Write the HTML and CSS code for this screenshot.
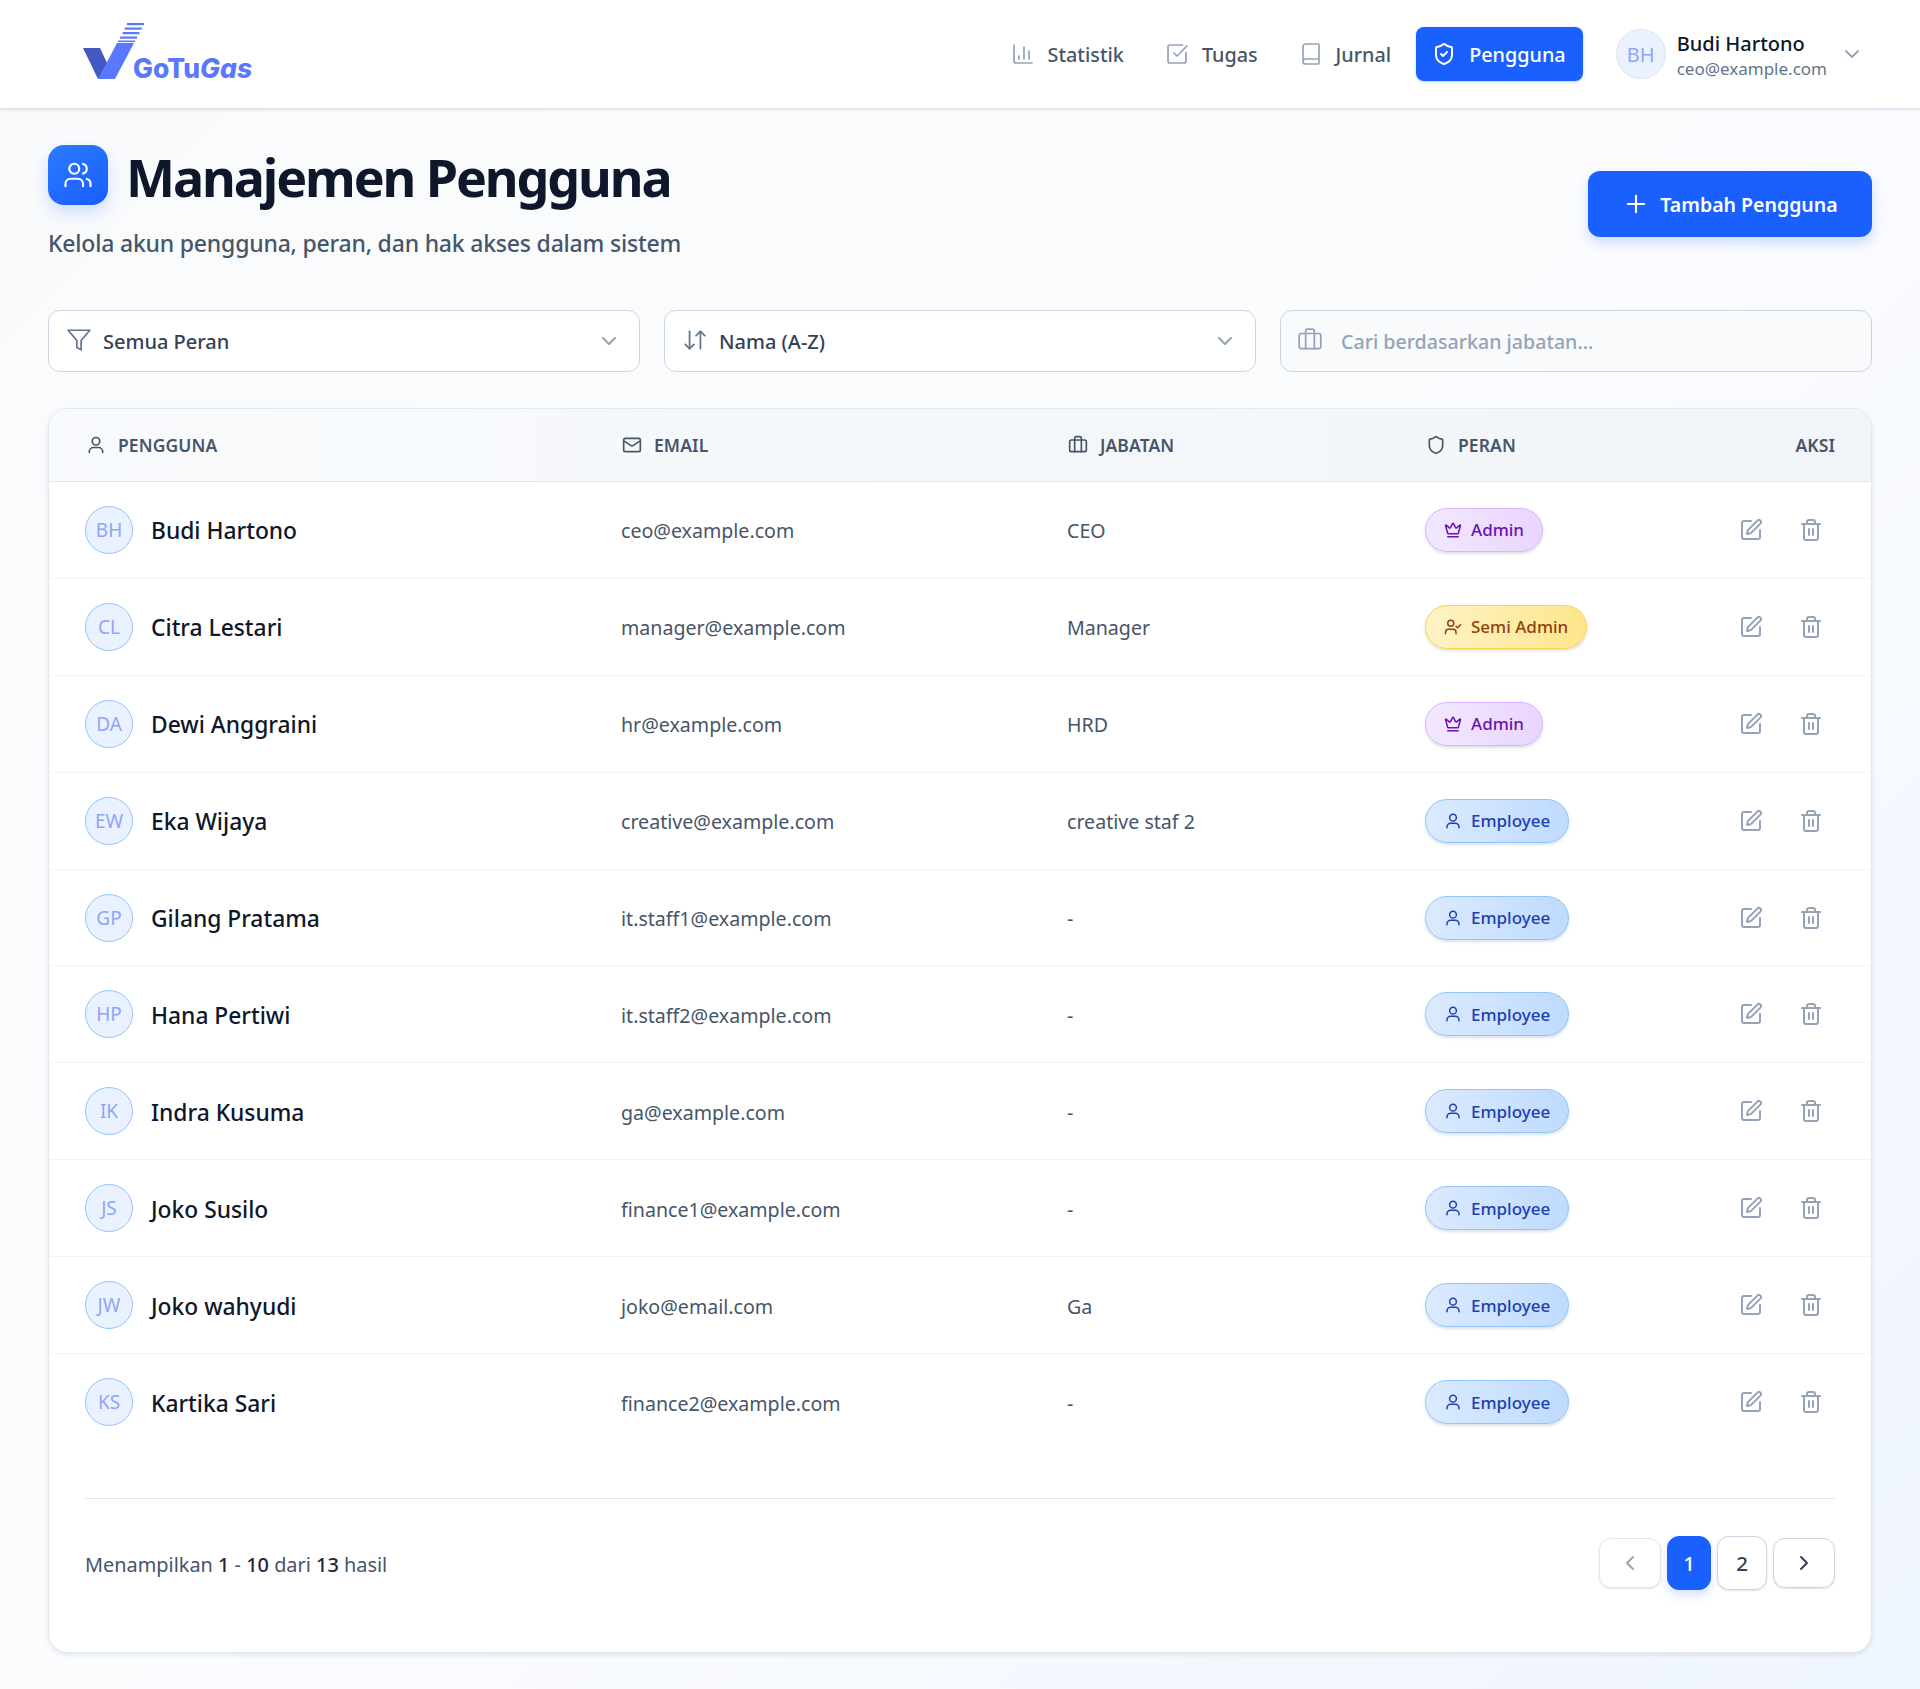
FILE: index.html
```html
<!DOCTYPE html>
<html lang="id">
<head>
<meta charset="utf-8">
<title>Manajemen Pengguna</title>
<link rel="stylesheet" href="styles.css">
</head>
<body>
<svg class="sprite" width="0" height="0" aria-hidden="true">
  <defs>
    <symbol id="i-user" viewBox="0 0 24 24"><circle cx="12" cy="7.5" r="4.5"/><path d="M20 21v-1a5 5 0 0 0-5-5H9a5 5 0 0 0-5 5v1"/></symbol>
    <symbol id="i-mail" viewBox="0 0 24 24"><rect x="2" y="4" width="20" height="16" rx="2"/><path d="m22 7-8.97 5.7a1.94 1.94 0 0 1-2.06 0L2 7"/></symbol>
    <symbol id="i-brief" viewBox="0 0 24 24"><path d="M16 20V4a2 2 0 0 0-2-2h-4a2 2 0 0 0-2 2v16"/><rect x="2" y="6" width="20" height="14" rx="2"/></symbol>
    <symbol id="i-shield" viewBox="0 0 24 24"><path d="M20 13c0 5-3.5 7.5-7.66 8.95a1 1 0 0 1-.67-.01C7.5 20.5 4 18 4 13V6a1 1 0 0 1 1-1c2 0 4.5-1.2 6.24-2.72a1.17 1.17 0 0 1 1.52 0C14.51 3.81 17 5 19 5a1 1 0 0 1 1 1z"/></symbol>
    <symbol id="i-edit" viewBox="0 0 24 24"><path d="M12 3H5a2 2 0 0 0-2 2v14a2 2 0 0 0 2 2h14a2 2 0 0 0 2-2v-7"/><path d="M18.375 2.625a1 1 0 0 1 3 3l-9.013 9.014a2 2 0 0 1-.853.505l-2.873.84a.5.5 0 0 1-.62-.62l.84-2.873a2 2 0 0 1 .506-.852z"/></symbol>
    <symbol id="i-trash" viewBox="0 0 24 24"><path d="M3 6h18"/><path d="M19 6v14a2 2 0 0 1-2 2H7a2 2 0 0 1-2-2V6"/><path d="M8 6V4a2 2 0 0 1 2-2h4a2 2 0 0 1 2 2v2"/><path d="M10 11v6"/><path d="M14 11v6"/></symbol>
    <symbol id="i-crown" viewBox="0 0 24 24"><path d="M11.562 3.266a.5.5 0 0 1 .876 0L15.39 8.87a1 1 0 0 0 1.516.294L21.183 5.5a.5.5 0 0 1 .798.519l-2.834 10.246a1 1 0 0 1-.956.734H5.81a1 1 0 0 1-.957-.734L2.02 6.02a.5.5 0 0 1 .798-.519l4.276 3.664a1 1 0 0 0 1.516-.294z"/><path d="M5 21h14"/></symbol>
    <symbol id="i-usercheck" viewBox="0 0 24 24"><path d="M16 21v-2a4 4 0 0 0-4-4H6a4 4 0 0 0-4 4v2"/><circle cx="9" cy="7" r="4"/><path d="m16 11 2 2 4-4"/></symbol>
    <symbol id="i-chev" viewBox="0 0 24 24"><path d="m6 9 6 6 6-6"/></symbol>
  </defs>
</svg>

<header class="topbar">
  <div class="logo">
    <svg class="logo-mark" viewBox="0 0 61 56" aria-hidden="true">
      <polygon points="0,25 17,25 25,42 15,56" fill="#4458c4"/>
      <polygon points="34,20 51,20 32,56 15,56" fill="#5a78ff"/>
      <rect x="44" y="0" width="17" height="2.2" fill="#5a78ff"/>
      <rect x="41.7" y="4.5" width="17" height="2.2" fill="#5a78ff"/>
      <rect x="39.5" y="9" width="17" height="2.2" fill="#5a78ff"/>
      <rect x="37" y="13.5" width="17" height="2.2" fill="#5a78ff"/>
      <rect x="35" y="17.5" width="17" height="1.6" fill="#5a78ff"/>
    </svg>
    <span class="logo-text">GoTu<em>Gas</em></span>
  </div>
  <nav class="nav">
    <a class="nav-item"><svg class="ico nav-ico" viewBox="0 0 24 24"><path d="M3 3v16a2 2 0 0 0 2 2h16"/><path d="M8 17v-3"/><path d="M13 17V5"/><path d="M18 17V9"/></svg>Statistik</a>
    <a class="nav-item"><svg class="ico nav-ico" viewBox="0 0 24 24"><path d="M21 10.5V19a2 2 0 0 1-2 2H5a2 2 0 0 1-2-2V5a2 2 0 0 1 2-2h12.5"/><path d="m9 11 3 3L22 4"/></svg>Tugas</a>
    <a class="nav-item"><svg class="ico nav-ico" viewBox="0 0 24 24"><path d="M4 19.5v-15A2.5 2.5 0 0 1 6.5 2H19a1 1 0 0 1 1 1v18a1 1 0 0 1-1 1H6.5a1 1 0 0 1 0-5H20"/></svg>Jurnal</a>
    <a class="nav-item nav-active"><svg class="ico nav-ico" viewBox="0 0 24 24"><path d="M20 13c0 5-3.5 7.5-7.66 8.95a1 1 0 0 1-.67-.01C7.5 20.5 4 18 4 13V6a1 1 0 0 1 1-1c2 0 4.5-1.2 6.24-2.72a1.17 1.17 0 0 1 1.52 0C14.51 3.81 17 5 19 5a1 1 0 0 1 1 1z"/><path d="m9 12 2 2 4-4"/></svg>Pengguna</a>
  </nav>
  <div class="account">
    <span class="avatar avatar-top">BH</span>
    <span class="account-text"><span class="account-name">Budi Hartono</span><span class="account-mail">ceo@example.com</span></span>
    <svg class="ico account-chev"><use href="#i-chev"/></svg>
  </div>
</header>

<main class="page">
  <section class="head">
    <div>
      <div class="title-row">
        <span class="title-badge"><svg class="ico" viewBox="0 0 24 24"><path d="M16 21v-2a4 4 0 0 0-4-4H6a4 4 0 0 0-4 4v2"/><circle cx="9" cy="7" r="4"/><path d="M22 21v-2a4 4 0 0 0-3-3.87"/><path d="M16 3.13a4 4 0 0 1 0 7.75"/></svg></span>
        <h1>Manajemen Pengguna</h1>
      </div>
      <p class="subtitle">Kelola akun pengguna, peran, dan hak akses dalam sistem</p>
    </div>
    <button class="add-btn"><svg class="ico" viewBox="0 0 24 24"><path d="M5 12h14"/><path d="M12 5v14"/></svg>Tambah Pengguna</button>
  </section>

  <section class="filters">
    <div class="field"><svg class="ico field-ico" viewBox="0 0 24 24"><polygon points="22 3 2 3 10 12.46 10 19 14 21 14 12.46 22 3"/></svg><span class="field-val">Semua Peran</span><svg class="ico field-chev"><use href="#i-chev"/></svg></div>
    <div class="field"><svg class="ico field-ico" viewBox="0 0 24 24"><path d="m3 16 4 4 4-4"/><path d="M7 20V4"/><path d="m21 8-4-4-4 4"/><path d="M17 4v16"/></svg><span class="field-val">Nama (A-Z)</span><svg class="ico field-chev"><use href="#i-chev"/></svg></div>
    <div class="field field-search"><svg class="ico field-ico"><use href="#i-brief"/></svg><span class="field-ph">Cari berdasarkan jabatan...</span></div>
  </section>

  <section class="card">
    <div class="row row-head">
      <div class="th"><svg class="ico th-ico"><use href="#i-user"/></svg>PENGGUNA</div>
      <div class="th"><svg class="ico th-ico"><use href="#i-mail"/></svg>EMAIL</div>
      <div class="th"><svg class="ico th-ico"><use href="#i-brief"/></svg>JABATAN</div>
      <div class="th"><svg class="ico th-ico"><use href="#i-shield"/></svg>PERAN</div>
      <div class="th th-right">AKSI</div>
    </div>

    <div class="row"><div class="user"><span class="avatar">BH</span><span class="name">Budi Hartono</span></div><div class="cell">ceo@example.com</div><div class="cell">CEO</div><div><span class="pill pill-admin"><svg class="ico pill-ico"><use href="#i-crown"/></svg>Admin</span></div><div class="acts"><svg class="ico act"><use href="#i-edit"/></svg><svg class="ico act"><use href="#i-trash"/></svg></div></div>
    <div class="row"><div class="user"><span class="avatar">CL</span><span class="name">Citra Lestari</span></div><div class="cell">manager@example.com</div><div class="cell">Manager</div><div><span class="pill pill-semi"><svg class="ico pill-ico"><use href="#i-usercheck"/></svg>Semi Admin</span></div><div class="acts"><svg class="ico act"><use href="#i-edit"/></svg><svg class="ico act"><use href="#i-trash"/></svg></div></div>
    <div class="row"><div class="user"><span class="avatar">DA</span><span class="name">Dewi Anggraini</span></div><div class="cell">hr@example.com</div><div class="cell">HRD</div><div><span class="pill pill-admin"><svg class="ico pill-ico"><use href="#i-crown"/></svg>Admin</span></div><div class="acts"><svg class="ico act"><use href="#i-edit"/></svg><svg class="ico act"><use href="#i-trash"/></svg></div></div>
    <div class="row"><div class="user"><span class="avatar">EW</span><span class="name">Eka Wijaya</span></div><div class="cell">creative@example.com</div><div class="cell">creative staf 2</div><div><span class="pill pill-emp"><svg class="ico pill-ico"><use href="#i-user"/></svg>Employee</span></div><div class="acts"><svg class="ico act"><use href="#i-edit"/></svg><svg class="ico act"><use href="#i-trash"/></svg></div></div>
    <div class="row"><div class="user"><span class="avatar">GP</span><span class="name">Gilang Pratama</span></div><div class="cell">it.staff1@example.com</div><div class="cell">-</div><div><span class="pill pill-emp"><svg class="ico pill-ico"><use href="#i-user"/></svg>Employee</span></div><div class="acts"><svg class="ico act"><use href="#i-edit"/></svg><svg class="ico act"><use href="#i-trash"/></svg></div></div>
    <div class="row"><div class="user"><span class="avatar">HP</span><span class="name">Hana Pertiwi</span></div><div class="cell">it.staff2@example.com</div><div class="cell">-</div><div><span class="pill pill-emp"><svg class="ico pill-ico"><use href="#i-user"/></svg>Employee</span></div><div class="acts"><svg class="ico act"><use href="#i-edit"/></svg><svg class="ico act"><use href="#i-trash"/></svg></div></div>
    <div class="row"><div class="user"><span class="avatar">IK</span><span class="name">Indra Kusuma</span></div><div class="cell">ga@example.com</div><div class="cell">-</div><div><span class="pill pill-emp"><svg class="ico pill-ico"><use href="#i-user"/></svg>Employee</span></div><div class="acts"><svg class="ico act"><use href="#i-edit"/></svg><svg class="ico act"><use href="#i-trash"/></svg></div></div>
    <div class="row"><div class="user"><span class="avatar">JS</span><span class="name">Joko Susilo</span></div><div class="cell">finance1@example.com</div><div class="cell">-</div><div><span class="pill pill-emp"><svg class="ico pill-ico"><use href="#i-user"/></svg>Employee</span></div><div class="acts"><svg class="ico act"><use href="#i-edit"/></svg><svg class="ico act"><use href="#i-trash"/></svg></div></div>
    <div class="row"><div class="user"><span class="avatar">JW</span><span class="name">Joko wahyudi</span></div><div class="cell">joko@email.com</div><div class="cell">Ga</div><div><span class="pill pill-emp"><svg class="ico pill-ico"><use href="#i-user"/></svg>Employee</span></div><div class="acts"><svg class="ico act"><use href="#i-edit"/></svg><svg class="ico act"><use href="#i-trash"/></svg></div></div>
    <div class="row row-last"><div class="user"><span class="avatar">KS</span><span class="name">Kartika Sari</span></div><div class="cell">finance2@example.com</div><div class="cell">-</div><div><span class="pill pill-emp"><svg class="ico pill-ico"><use href="#i-user"/></svg>Employee</span></div><div class="acts"><svg class="ico act"><use href="#i-edit"/></svg><svg class="ico act"><use href="#i-trash"/></svg></div></div>

    <div class="pager">
      <div class="pager-text">Menampilkan <b>1</b> - <b>10</b> dari <b>13</b> hasil</div>
      <div class="pager-btns">
        <span class="pg pg-arrow pg-off"><svg class="ico pg-ico" viewBox="0 0 24 24"><path d="m15 18-6-6 6-6"/></svg></span>
        <span class="pg pg-num pg-cur">1</span>
        <span class="pg pg-num">2</span>
        <span class="pg pg-arrow"><svg class="ico pg-ico" viewBox="0 0 24 24"><path d="m9 18 6-6-6-6"/></svg></span>
      </div>
    </div>
  </section>
</main>
</body>
</html>
```

FILE: styles.css
```css
* { box-sizing: border-box; }
html, body { margin: 0; padding: 0; }
body {
  font-family: "Noto Sans", "Open Sans", sans-serif;
  color: #0f172a;
  min-height: 1689px;
  background: linear-gradient(135deg, #f8fafc 0%, #fbfcfe 50%, #eff5fe 100%);
}
.sprite { position: absolute; }
.ico { width: 24px; height: 24px; fill: none; stroke: currentColor; stroke-width: 2; stroke-linecap: round; stroke-linejoin: round; flex: none; }

.topbar {
  height: 108px; background: #fff; display: flex; align-items: center;
  padding: 0 56px 0 83px;
  box-shadow: 0 1px 3px rgba(100,116,139,.3);
  position: relative;
}
.logo { display: flex; align-items: flex-end; height: 56px; margin-top: -6px; }
.logo-mark { width: 61px; height: 56px; flex: none; }
.logo-text { font-family: "Inter", sans-serif; font-weight: 800; font-size: 26.5px; color: #5a78ff; margin-left: -11px; line-height: 30px; margin-bottom: -4px; }
.logo-text em { font-style: italic; }

.nav { margin-left: auto; display: flex; align-items: center; gap: 9px; }
.nav-item { display: flex; align-items: center; height: 54px; padding: 0 16px; gap: 13px; font-size: 19.8px; font-weight: 500; color: #475569; border-radius: 8px; }
.nav-ico { width: 24px; height: 24px; stroke: #94a3b8; stroke-width: 1.7; }
.nav-active { background: #1a60ff; color: #fff; padding: 0 17px 0 16px; box-shadow: 0 1px 3px rgba(26,96,255,.3); }
.nav-active .nav-ico { stroke: #fff; stroke-width: 2; }

.account { display: flex; align-items: center; margin-left: 33px; }
.avatar { width: 48px; height: 48px; border-radius: 50%; background: #eaf2ff; border: 1px solid #93c5fd; color: #8ea5f8; display: flex; align-items: center; justify-content: center; font-size: 19px; flex: none; }
.avatar-top { width: 50px; height: 50px; border-color: #dbe4f0; font-size: 20px; }
.account-text { display: flex; flex-direction: column; margin-left: 11px; margin-top: 2px; }
.account-name { font-size: 20px; font-weight: 500; line-height: 27px; color: #0f172a; }
.account-mail { font-size: 17px; line-height: 24px; color: #64748b; }
.account-chev { width: 24px; height: 24px; stroke: #94a3b8; margin-left: 13px; stroke-width: 1.8; }

.page { padding: 0 48px; }
.head { display: flex; justify-content: space-between; align-items: flex-start; padding-top: 37px; }
.title-row { display: flex; align-items: flex-start; gap: 18px; }
.title-badge { width: 60px; height: 60px; border-radius: 16px; background: linear-gradient(145deg, #2a7cff, #1a5cff); color: #fff; display: flex; align-items: center; justify-content: center; box-shadow: 0 8px 16px rgba(26,96,255,.18); }
.title-badge .ico { width: 30px; height: 30px; stroke-width: 1.7; }
h1 { margin: -1px 0 1px; font-size: 52px; line-height: 66px; font-weight: 700; color: #0f172a; letter-spacing: -2.1px; }
.subtitle { margin: 15px 0 0; font-size: 23px; line-height: 34px; font-weight: 500; color: #475569; letter-spacing: -.2px; }
.add-btn { margin-top: 26px; height: 66px; width: 284px; border: 0; border-radius: 12px; background: #1a60ff; color: #fff; font: 600 19.5px "Noto Sans", sans-serif; display: flex; align-items: center; justify-content: center; gap: 10px; box-shadow: 0 6px 12px rgba(26,96,255,.2); }
.add-btn .ico { width: 28px; height: 28px; stroke-width: 1.8; }

.filters { display: grid; grid-template-columns: repeat(3, 1fr); gap: 24px; margin-top: 50px; }
.field { height: 62px; border: 1px solid #cbd5e1; border-radius: 12px; background: #fff; display: flex; align-items: center; padding: 0 18px 0 17px; }
.field-ico { width: 26px; height: 26px; stroke: #64748b; stroke-width: 1.6; margin-top: -2px; }
.field-val { margin-left: 11px; font-size: 20px; font-weight: 500; color: #334155; }
.field-chev { margin-left: auto; width: 24px; height: 24px; stroke: #94a3b8; stroke-width: 2; }
.field-search { background: #f8fafc; padding-left: 16px; }
.field-search .field-ico { stroke: #94a3b8; }
.field-ph { margin-left: 18px; font-size: 19.6px; font-weight: 500; color: #94a3b8; }

.card { margin-top: 36px; background: #fff; border: 1px solid #e2e8f0; border-radius: 20px; box-shadow: 0 2px 4px rgba(100,116,139,.16); overflow: hidden; height: 1245px; }
.row { display: grid; grid-template-columns: 536px 446px 358px 1fr 130px; align-items: center; height: 96.9px; padding: 2px 36px 0; border-bottom: 1px solid #f1f5f9; }
.row-last { border-bottom: 0; }
.row-head { height: 73px; padding-top: 0; background: linear-gradient(90deg, #f8fafc, #f1f5f9); border-bottom: 1px solid #e2e8f0; }
.th { display: flex; align-items: center; gap: 12px; font-size: 17.5px; font-weight: 600; color: #475569; letter-spacing: .1px; }
.th-ico { width: 20px; height: 20px; stroke-width: 2; margin-left: 1px; }
.th-right { justify-content: flex-end; }
.user { display: flex; align-items: center; gap: 18px; }
.user .avatar { margin-top: -2px; }
.name { font-size: 22.8px; font-weight: 500; color: #0f172a; }
.cell { font-size: 19.6px; color: #475569; }
.pill { display: inline-flex; align-items: center; height: 44px; padding: 0 18px; gap: 9px; border-radius: 22px; border: 1px solid; font-size: 17px; font-weight: 500; box-shadow: 0 2px 3px rgba(100,116,139,.22); vertical-align: middle; position: relative; top: -1px; }
.pill-ico { width: 18px; height: 18px; stroke-width: 2; }
.pill-admin { background: linear-gradient(90deg, #f3e8ff, #e9d5ff); border-color: #d8b4fe; color: #6b14b0; }
.pill-semi { background: linear-gradient(90deg, #fef3c7, #fde68a); border-color: #fcd34d; color: #92400e; }
.pill-emp { background: linear-gradient(90deg, #dbeafe, #bfdbfe); border-color: #93c5fd; color: #1e40af; }
.acts { display: flex; justify-content: flex-end; gap: 36px; padding-right: 12px; margin-top: -2px; }
.act { width: 24px; height: 24px; stroke: #94a3b8; stroke-width: 2; }

.pager { margin: 47px 36px 0; border-top: 1px solid #e2e8f0; padding-top: 37px; display: flex; justify-content: space-between; align-items: center; }
.pager-text { font-size: 19.9px; color: #475569; margin-top: 3px; }
.pager-text b { font-weight: 500; color: #1e293b; }
.pager-btns { display: flex; align-items: center; gap: 6px; }
.pg { display: flex; align-items: center; justify-content: center; background: #fff; border: 1px solid #cbd5e1; border-radius: 12px; color: #334155; box-shadow: 0 1px 2px rgba(100,116,139,.2); }
.pg-arrow { width: 62px; height: 50px; }
.pg-num { width: 50px; height: 54px; font-size: 20.5px; font-weight: 500; }
.pg-off { border-color: #e2e8f0; color: #9ca3af; }
.pg-cur { width: 44px; background: #1a60ff; border-color: #1a60ff; color: #fff; box-shadow: 0 6px 10px rgba(26,96,255,.16); }
.pg-ico { width: 24px; height: 24px; }
```
